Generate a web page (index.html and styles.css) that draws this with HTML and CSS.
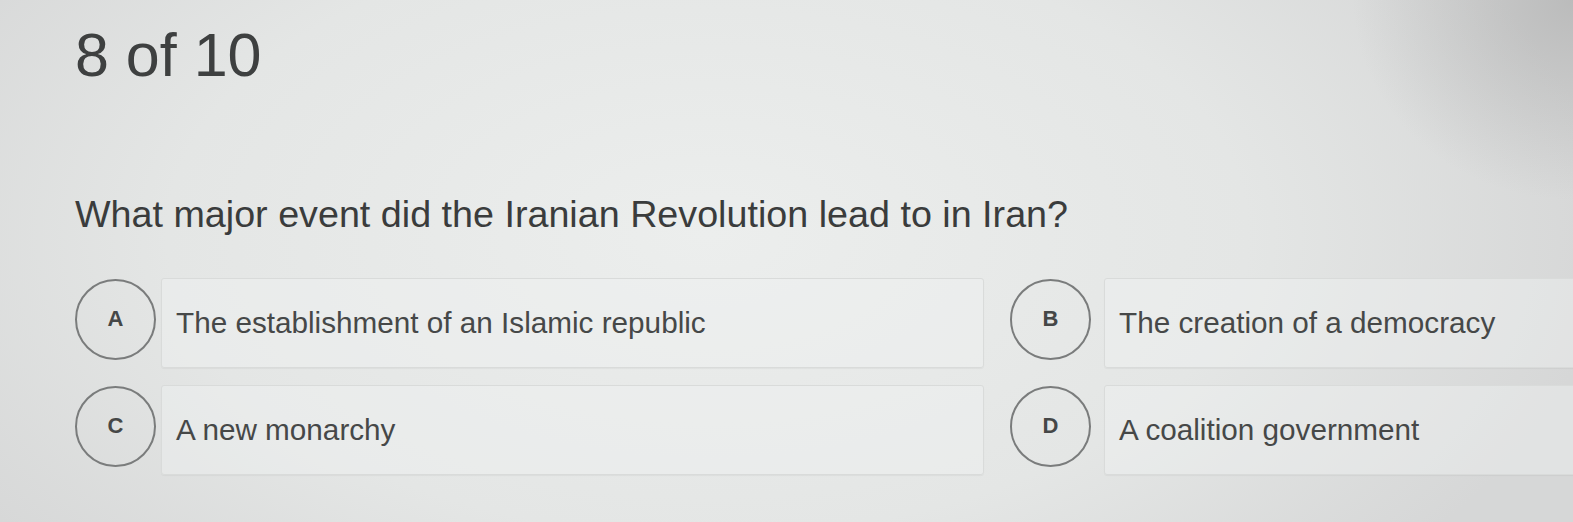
FILE: index.html
```html
<!DOCTYPE html>
<html lang="en">
<head>
<meta charset="utf-8">
<title>Quiz</title>
<link rel="stylesheet" href="styles.css">
</head>
<body>
<main class="page">
  <div class="counter">8 of 10</div>
  <div class="question">What major event did the Iranian Revolution lead to in Iran?</div>
  <div class="options">
    <div class="option">
      <div class="letter">A</div>
      <div class="answer">The establishment of an Islamic republic</div>
    </div>
    <div class="option option-right">
      <div class="letter">B</div>
      <div class="answer">The creation of a democracy</div>
    </div>
    <div class="option">
      <div class="letter">C</div>
      <div class="answer">A new monarchy</div>
    </div>
    <div class="option option-right">
      <div class="letter">D</div>
      <div class="answer">A coalition government</div>
    </div>
  </div>
</main>
</body>
</html>
```
FILE: styles.css
```css
html, body {
  margin: 0;
  height: 522px;
  overflow: hidden;
}
body {
  font-family: "Liberation Sans", Arial, sans-serif;
  color: #404242;
  background:
    radial-gradient(ellipse 220px 200px at 100% 0%, rgba(160,160,160,0.5), rgba(160,160,160,0) 100%),
    radial-gradient(ellipse 900px 500px at 45% 45%, #eceeed 0%, #e4e6e5 60%, #d6d7d7 100%);
}
.page {
  padding: 20px 0 0 75px;
  width: 1850px;
}
.counter {
  font-size: 61px;
  line-height: 70px;
  color: #3e4040;
}
.question {
  margin-top: 103px;
  font-size: 37.7px;
  line-height: 42px;
  color: #3a3c3c;
}
.options {
  margin-top: 43px;
  display: grid;
  grid-template-columns: 909px 909px;
  column-gap: 26px;
  row-gap: 17px;
}
.option {
  display: flex;
  align-items: center;
  gap: 5px;
}
.option-right {
  gap: 13px;
}
.letter {
  width: 77px;
  height: 77px;
  flex: none;
  border: 2px solid #7a7c7c;
  border-radius: 50%;
  display: flex;
  align-items: center;
  justify-content: center;
  font-weight: bold;
  font-size: 22px;
  color: #454747;
  margin-top: -8px;
}
.answer {
  flex: 1;
  height: 88px;
  display: flex;
  align-items: center;
  padding-left: 14px;
  font-size: 29.7px;
  color: #464848;
  background: rgba(240,242,241,0.45);
  border: 1px solid #d9dbda;
  border-radius: 3px;
  box-shadow: 0 1px 1px rgba(0,0,0,0.04);
}
```
